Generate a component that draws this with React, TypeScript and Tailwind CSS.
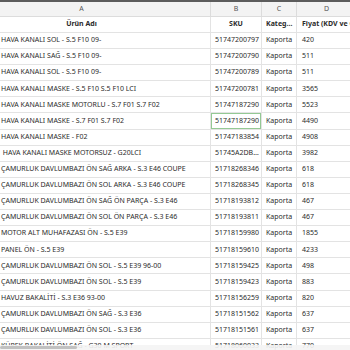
import React from "react";

const rows: [string, string, string][] = [
  ["HAVA KANALI SOL - S.5 F10 09-", "51747200797", "420"],
  ["HAVA KANALI SAĞ - S.5 F10 09-", "51747200790", "511"],
  ["HAVA KANALI SOL - S.5 F10 09-", "51747200789", "511"],
  ["HAVA KANALI MASKE - S.5 F10 S.5 F10 LCI", "51747200781", "3565"],
  ["HAVA KANALI MASKE MOTORLU - S.7 F01 S.7 F02", "51747187290", "5523"],
  ["HAVA KANALI MASKE - S.7 F01 S.7 F02", "51747187290", "4490"],
  ["HAVA KANALI MASKE - F02", "51747183854", "4908"],
  ["\u00a0HAVA KANALI MASKE MOTORSUZ - G20LCI", "51745A2DB9A2", "3982"],
  ["ÇAMURLUK DAVLUMBAZI ÖN SAĞ ARKA - S.3 E46 COUPE", "51718268346", "618"],
  ["ÇAMURLUK DAVLUMBAZI ÖN SOL ARKA - S.3 E46 COUPE", "51718268345", "618"],
  ["ÇAMURLUK DAVLUMBAZI ÖN SAĞ ÖN PARÇA - S.3 E46", "51718193812", "467"],
  ["ÇAMURLUK DAVLUMBAZI ÖN SOL ÖN PARÇA - S.3 E46", "51718193811", "467"],
  ["MOTOR ALT MUHAFAZASI ÖN - S.5 E39", "51718159980", "1855"],
  ["PANEL ÖN - S.5 E39", "51718159610", "4233"],
  ["ÇAMURLUK DAVLUMBAZI ÖN SOL - S.5 E39 96-00", "51718159425", "498"],
  ["ÇAMURLUK DAVLUMBAZI ÖN SOL - S.5 E39", "51718159423", "883"],
  ["HAVUZ BAKALİTİ - S.3 E36 93-00", "51718156259", "820"],
  ["ÇAMURLUK DAVLUMBAZI ÖN SAĞ - S.3 E36", "51718151562", "637"],
  ["ÇAMURLUK DAVLUMBAZI ÖN SOL - S.3 E36", "51718151561", "637"],
  ["KÜPEK BAKALİTİ ÖN SAĞ - G30 M SPORT", "51718060033", "770"],
];

const cell =
  "h-[16.1px] border-b border-r border-[#e3e3e3] flex items-center overflow-hidden whitespace-nowrap";

export default function App() {
  return (
    <div
      className="relative w-[350px] h-[350px] overflow-hidden bg-white text-[#2b2b2b]"
      style={{ fontFamily: '"Noto Sans", "Open Sans", sans-serif' }}
    >
      <div className="h-[2px] bg-[#5c5c5c]" />
      <div className="grid grid-cols-[211px_51px_35px_60px] text-[7px] w-[400px]">
        {/* letter row */}
        <div className="h-[15px] bg-[#f3f3f3] border-b border-r border-[#dcdcdc] flex items-center justify-center pr-[47px] text-[#555]">A</div>
        <div className="h-[15px] bg-[#f3f3f3] border-b border-r border-[#dcdcdc] flex items-center justify-center text-[#555]">B</div>
        <div className="h-[15px] bg-[#f3f3f3] border-b border-r border-[#dcdcdc] flex items-center justify-center text-[#555]">C</div>
        <div className="h-[15px] bg-[#f3f3f3] border-b border-r border-[#dcdcdc] flex items-center justify-center text-[#555]">D</div>
        {/* header row */}
        <div className={`${cell} h-[16px] justify-center pr-[47px] font-bold`}>Ürün Adı</div>
        <div className={`${cell} h-[16px] justify-center font-bold`}>SKU</div>
        <div className={`${cell} h-[16px] pl-[4px] font-bold`}>
          <span className="block overflow-hidden text-ellipsis w-full">Kategori</span>
        </div>
        <div className={`${cell} h-[16px] pl-[5px] font-bold`}>Fiyat (KDV ve ÖTV)</div>
        {rows.map(([name, sku, price], i) => (
          <React.Fragment key={i}>
            <div className={`${cell} pl-[1px]`}>{name}</div>
            <div className={`${cell} pl-[4px] ${i === 5 ? "shadow-[inset_0_0_0_1px_#94c994]" : ""}`}>
              <span className="block overflow-hidden text-ellipsis w-full pr-[1px]">{sku}</span>
            </div>
            <div className={`${cell} pl-[4px]`}>Kaporta</div>
            <div className={`${cell} pl-[5px]`}>{price}</div>
          </React.Fragment>
        ))}
      </div>
      <div className="absolute left-0 right-0 bottom-0 h-[5px] bg-[#f4f4f4]/90">
        <div className="h-[3px] mt-[1px] w-[77px] rounded-full bg-[#c1c1c1]" />
      </div>
    </div>
  );
}
